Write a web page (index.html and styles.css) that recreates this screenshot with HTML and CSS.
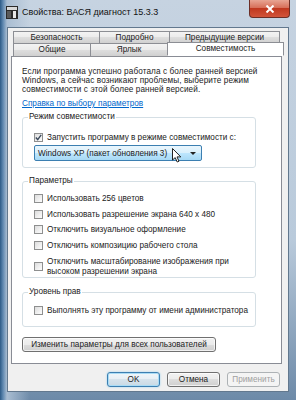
FILE: index.html
```html
<!DOCTYPE html>
<html lang="ru">
<head>
<meta charset="UTF-8">
<title>Свойства: ВАСЯ диагност 15.3.3</title>
<link rel="stylesheet" href="styles.css">
</head>
<body>
<div class="window">
  <div class="titlebar">
    <svg class="app-icon" width="12" height="13" viewBox="0 0 12 13">
      <rect x="0" y="0" width="12" height="13" fill="#2b2b2b"/>
      <rect x="1" y="1" width="10" height="3" fill="#d9d9d9"/>
      <rect x="1" y="5" width="4" height="7" fill="#5a5a5a"/>
      <rect x="7" y="5" width="3" height="7" fill="#e8e8e8"/>
    </svg>
    <div class="title">Свойства: ВАСЯ диагност 15.3.3</div>
    <div class="close">
      <svg width="10" height="8" viewBox="0 0 10 8">
        <path d="M1.5 0.5 L8.5 7.5 M8.5 0.5 L1.5 7.5" stroke="#fff" stroke-width="2"/>
      </svg>
    </div>
  </div>

  <div class="client">
    <div class="tabs">
      <div class="tab-row">
        <div class="tab w-sec">Безопасность</div>
        <div class="tab w-det">Подробно</div>
        <div class="tab w-prev">Предыдущие версии</div>
      </div>
      <div class="tab-row front">
        <div class="tab w-gen">Общие</div>
        <div class="tab w-lnk">Ярлык</div>
        <div class="tab w-cmp selected">Совместимость</div>
      </div>
    </div>

    <div class="panel">
      <p class="intro">Если программа успешно работала с более ранней версией<br>Windows, а сейчас возникают проблемы, выберите режим<br>совместимости с этой более ранней версией.</p>
      <a class="help-link" href="#">Справка по выбору параметров</a>

      <fieldset class="group group-mode">
        <legend>Режим совместимости</legend>
        <div class="group-body">
          <div class="check-row">
            <span class="box checked">
              <svg width="7" height="7" viewBox="0 0 7 7"><path d="M0.8 3.6 L2.7 5.6 L6.2 0.9" fill="none" stroke="#3c4a5c" stroke-width="1.4"/></svg>
            </span>
            <span>Запустить программу в режиме совместимости с:</span>
          </div>
          <div class="combo">
            <span>Windows XP (пакет обновления 3)</span>
            <span class="combo-arrow"></span>
            <svg class="cursor" width="11" height="15" viewBox="0 0 11 15">
              <path d="M0.5 0.5 L0.5 12 L3.2 9.6 L5.2 14 L7 13.2 L5 8.9 L8.8 8.9 Z" fill="#fff" stroke="#222" stroke-width="1"/>
            </svg>
          </div>
        </div>
      </fieldset>

      <fieldset class="group group-params">
        <legend>Параметры</legend>
        <div class="group-body">
          <div class="check-row"><span class="box"></span><span>Использовать 256 цветов</span></div>
          <div class="check-row"><span class="box"></span><span>Использовать разрешение экрана 640 x 480</span></div>
          <div class="check-row"><span class="box"></span><span>Отключить визуальное оформление</span></div>
          <div class="check-row"><span class="box"></span><span>Отключить композицию рабочего стола</span></div>
          <div class="check-row tall"><span class="box"></span><span>Отключить масштабирование изображения при<br>высоком разрешении экрана</span></div>
        </div>
      </fieldset>

      <fieldset class="group group-rights">
        <legend>Уровень прав</legend>
        <div class="group-body">
          <div class="check-row"><span class="box"></span><span>Выполнять эту программу от имени администратора</span></div>
        </div>
      </fieldset>

      <button class="btn all-users">Изменить параметры для всех пользователей</button>
    </div>

    <div class="dialog-buttons">
      <button class="btn default">OK</button>
      <button class="btn">Отмена</button>
      <button class="btn" disabled>Применить</button>
    </div>
  </div>
</div>
</body>
</html>
```

FILE: styles.css
```css
body {
  margin: 0;
  font-family: "Liberation Sans", Arial, sans-serif;
  font-size: 8.2px;
  color: #222;
  background: #3d5f84;
}

.window {
  width: 296px;
  height: 400px;
  overflow: hidden;
  display: flex;
  flex-direction: column;
  background:
    linear-gradient(to right, #2c5a86 0, #5f88b0 3px, #a9bdd2 7px, rgba(190,205,222,0) 30px),
    linear-gradient(to bottom, #c6d3e1 0, #b9cadb 60%, #6d8aa8 100%);
}

.titlebar {
  height: 27px;
  flex: none;
  display: flex;
  align-items: flex-start;
  padding-left: 6px;
}
.app-icon {
  margin-top: 6px;
}
.title {
  margin-left: 4px;
  margin-top: 7px;
  font-size: 9px;
  line-height: 11px;
  color: #111;
}
.close {
  margin-left: auto;
  margin-right: 6px;
  width: 39px;
  height: 17px;
  border: 1px solid #6c2e26;
  border-top: none;
  border-radius: 0 0 4px 4px;
  background: linear-gradient(to bottom, #e8a593 0, #d7705a 45%, #c0381f 50%, #d2543a 100%);
  display: flex;
  align-items: center;
  justify-content: center;
}

.client {
  margin: 0 7px;
  height: 365px;
  box-sizing: border-box;
  border: 1px solid #62788e;
  background: #f0f0f0;
  display: flex;
  flex-direction: column;
}

/* tabs */
.tabs {
  margin-top: 3px;
  padding-left: 5px;
  position: relative;
  z-index: 1;
  margin-bottom: -1px;
}
.tab-row {
  display: flex;
}
.tab-row.front {
  margin-top: -1px;
}
.tab {
  height: 13px;
  box-sizing: border-box;
  border: 1px solid #8c8e94;
  margin-left: -1px;
  background: linear-gradient(to bottom, #f3f3f3 0, #ebebeb 50%, #dedede 50%, #d0d0d0 100%);
  text-align: center;
  line-height: 11px;
  white-space: nowrap;
}
.tab-row .tab:first-child {
  margin-left: 0;
}
.tab-row.front .tab {
  height: 14px;
}
.tab.selected {
  background: #fff;
  border-bottom-color: #fff;
  height: 15px;
  margin-top: -1px;
  line-height: 12px;
}
.w-sec { width: 87px; }
.w-det { width: 71px; }
.w-prev { width: 111px; }
.w-gen { width: 78px; }
.w-lnk { width: 78px; }
.w-cmp { width: 117px; }

/* panel */
.panel {
  margin-left: 3px;
  width: 271px;
  height: 308px;
  box-sizing: border-box;
  border: 1px solid #898c95;
  background: #fff;
  padding: 10px 0 0 10px;
}
.intro {
  margin: 0;
  line-height: 9px;
  white-space: nowrap;
  letter-spacing: 0.1px;
}
.help-link {
  display: block;
  margin-top: 5px;
  line-height: 9px;
  color: #0066cc;
  text-decoration: underline;
}

.group {
  width: 234px;
  box-sizing: border-box;
  margin: 0;
  padding: 0 0 0 5px;
  border: 1px solid #d5dfe5;
  border-radius: 3px;
  min-width: 0;
}
.group legend {
  padding: 0 1px;
  line-height: 10px;
}
.group-body {
  padding-left: 6px;
}
.group-mode {
  margin-top: 4px;
}
.group-mode .group-body {
  padding-top: 10px;
  padding-bottom: 6px;
}
.group-params {
  margin-top: 8px;
}
.group-params .group-body {
  padding-top: 7px;
  padding-bottom: 1px;
}
.group-params .check-row + .check-row {
  margin-top: 4.5px;
}
.group-params .check-row.tall {
  margin-top: 6.5px;
}
.group-rights {
  margin-top: 9px;
}
.group-rights .group-body {
  padding-top: 8px;
  padding-bottom: 10px;
}

.check-row {
  display: flex;
  align-items: center;
  height: 11px;
  white-space: nowrap;
}
.check-row.tall {
  height: 19px;
  line-height: 9.5px;
}
.box {
  width: 9px;
  height: 9px;
  flex: none;
  box-sizing: border-box;
  margin-right: 4px;
  border: 1px solid #8e8f8f;
  background: linear-gradient(135deg, #dcdcdc 0, #f4f4f4 70%, #fbfbfb 100%);
  display: flex;
  align-items: center;
  justify-content: center;
}

.combo {
  position: relative;
  margin-top: 2px;
  width: 168px;
  height: 16px;
  box-sizing: border-box;
  border: 1px solid #3c7fb1;
  border-radius: 2px;
  background: linear-gradient(to bottom, #eaf6fd 0, #d9f0fc 50%, #bee6fd 50%, #a7d9f5 100%);
  display: flex;
  align-items: center;
  padding: 0 5px 0 3px;
}
.combo-arrow {
  margin-left: auto;
  width: 0;
  height: 0;
  border-left: 3px solid transparent;
  border-right: 3px solid transparent;
  border-top: 3px solid #222;
}
.cursor {
  position: absolute;
  left: 137px;
  top: 2px;
}

.btn {
  font: inherit;
  color: #222;
  height: 15px;
  padding: 0;
  box-sizing: border-box;
  border: 1px solid #707070;
  border-radius: 3px;
  background: linear-gradient(to bottom, #f2f2f2 0, #ebebeb 50%, #dddddd 50%, #cfcfcf 100%);
  box-shadow: inset 0 0 0 1px rgba(255,255,255,0.7);
}
.btn.all-users {
  display: block;
  margin-top: 10px;
  width: 194px;
}

.dialog-buttons {
  display: flex;
  justify-content: flex-end;
  gap: 7px;
  margin-top: 8px;
  padding-right: 8px;
}
.dialog-buttons .btn {
  width: 53px;
}
.btn.default {
  border-color: #3c7fb1;
  background: linear-gradient(to bottom, #f0f6fa 0, #e6eff5 50%, #d6e3ec 50%, #c9d9e4 100%);
  box-shadow: inset 0 0 0 1px #a9dcf6, 0 0 2px #8ccdee;
}
.btn:disabled {
  border-color: #adb2b5;
  background: #f4f4f4;
  color: #a0a0a0;
  box-shadow: none;
}
```
